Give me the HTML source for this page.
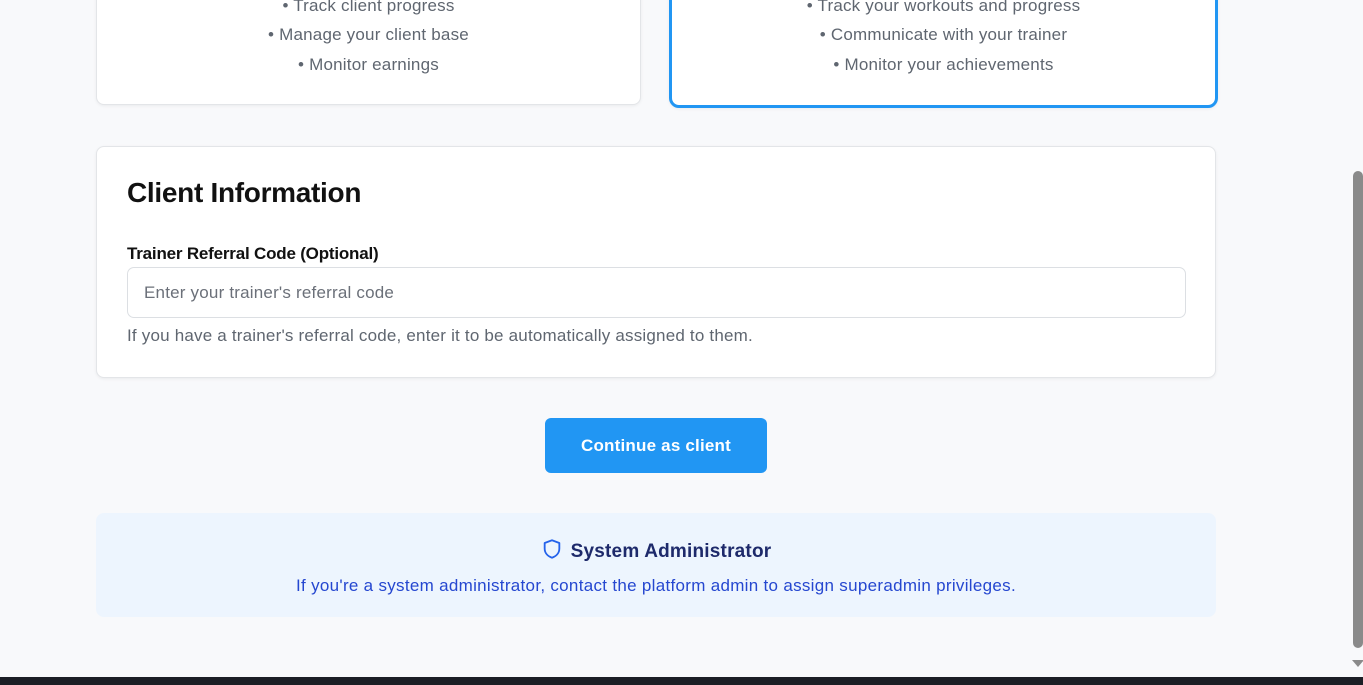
<!DOCTYPE html>
<html><head><style>
*{box-sizing:border-box;margin:0;padding:0}
body{width:1363px;height:685px;overflow:hidden;background:#f8f9fb;font-family:"Liberation Sans",sans-serif;position:relative;letter-spacing:0.2px}
.card{position:absolute;background:#fff;border:1px solid #e3e5e8;border-radius:8px;box-shadow:0 1px 3px rgba(0,0,0,.06)}
.li{position:absolute;width:100%;text-align:center;color:#5f6670;font-size:17px}
</style></head><body>
<div class="card" style="left:96px;top:-20px;width:545px;height:125px">
<div class="li" style="top:15px">• Track client progress</div>
<div class="li" style="top:44px">• Manage your client base</div>
<div class="li" style="top:74px">• Monitor earnings</div>
</div>
<div class="card" style="left:669px;top:-20px;width:549px;height:128px;border:3px solid #2196f3;border-radius:10px">
<div class="li" style="top:13px">• Track your workouts and progress</div>
<div class="li" style="top:42px">• Communicate with your trainer</div>
<div class="li" style="top:72px">• Monitor your achievements</div>
</div>
<div class="card" style="left:96px;top:146px;width:1120px;height:232px">
<div style="position:absolute;left:30px;top:30px;font-size:28px;color:#111;font-weight:bold;letter-spacing:-0.3px">Client Information</div>
<div style="position:absolute;left:30px;top:97px;font-size:17px;color:#111;font-weight:bold;letter-spacing:-0.2px">Trainer Referral Code (Optional)</div>
<div style="position:absolute;left:30px;top:120px;width:1059px;height:51px;border:1px solid #dcdfe3;border-radius:7px;padding:15px 16px;font-size:17px;color:#6b7079">Enter your trainer's referral code</div>
<div style="position:absolute;left:30px;top:179px;font-size:17px;color:#5f6670;letter-spacing:0.2px">If you have a trainer's referral code, enter it to be automatically assigned to them.</div>
</div>
<div style="position:absolute;left:545px;top:418px;width:222px;height:55px;background:#2196f3;border-radius:6px;color:#fff;font-size:17px;font-weight:bold;text-align:center;line-height:56px">Continue as client</div>
<div style="position:absolute;left:96px;top:513px;width:1120px;height:104px;background:#edf5fe;border-radius:8px">
<div style="position:absolute;left:0;width:100%;top:24px;text-align:center;font-size:19px;color:#1e2a6b;font-weight:bold">
<svg width="22" height="24" viewBox="0 0 24 24" style="vertical-align:-4px;margin-right:8px" fill="none" stroke="#2563eb" stroke-width="2" stroke-linejoin="round"><path d="M12 2.5l8 3v6c0 5-3.5 8.5-8 10-4.5-1.5-8-5-8-10v-6z"/></svg>System Administrator</div>
<div style="position:absolute;left:0;width:100%;top:63px;text-align:center;font-size:17px;color:#2547d0;letter-spacing:0.3px">If you're a system administrator, contact the platform admin to assign superadmin privileges.</div>
</div>
<div style="position:absolute;left:1348px;top:0;width:15px;height:677px;background:#f8f9fb"></div>
<div style="position:absolute;left:1353px;top:171px;width:10px;height:477px;background:#8a8a8a;border-radius:5px"></div>
<div style="position:absolute;left:1352px;top:660px;width:0;height:0;border-left:6px solid transparent;border-right:6px solid transparent;border-top:7px solid #8a8a8a"></div>
<div style="position:absolute;left:0;top:677px;width:1363px;height:8px;background:#1b1e25"></div>
</body></html>
